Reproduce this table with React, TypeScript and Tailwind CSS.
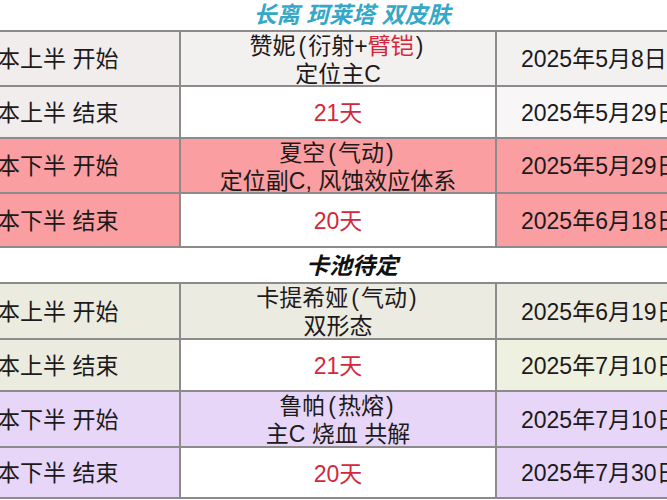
import React from 'react';

const FONT = { fontFamily: '"Liberation Sans", "Noto Sans CJK SC", sans-serif' };

type Row = {
    label: string;
    info: React.ReactNode;
    date: string;
    h: string;
    bg: string;
    mid: string;
    end: string;
};

const Red = ({ children }: { children: React.ReactNode }) => (
    <span className="text-[#d3283c]">{children}</span>
);

// half-width brackets with a bit of air, like the source sheet
const L = () => <span className="ml-[3px] mr-[2px]">(</span>;
const R = () => <span className="ml-[2px] mr-[3px]">)</span>;

const firstPool: Row[] = [
    {
        label: '本上半 开始',
        info: <>赞妮<L />衍射+<Red>臂铠</Red><R /><br />定位主C</>,
        date: '2025年5月8日',
        h: 'h-[55px]',
        bg: 'bg-[#f1eded]',
        mid: 'bg-[#f3f0f0]',
        end: 'bg-[#f3f0f0]',
    },
    {
        label: '本上半 结束',
        info: <Red>21天</Red>,
        date: '2025年5月29日',
        h: 'h-[52px]',
        bg: 'bg-[#f1eded]',
        mid: 'bg-white',
        end: 'bg-[#f8f6f6]',
    },
    {
        label: '本下半 开始',
        info: <>夏空<L />气动<R /><br />定位副C, 风蚀效应体系</>,
        date: '2025年5月29日',
        h: 'h-[55px]',
        bg: 'bg-[#fb9ea1]',
        mid: 'bg-[#fb9ea1]',
        end: 'bg-[#fb9ea1]',
    },
    {
        label: '本下半 结束',
        info: <Red>20天</Red>,
        date: '2025年6月18日',
        h: 'h-[54px]',
        bg: 'bg-[#fb9ea1]',
        mid: 'bg-white',
        end: 'bg-[#fb9ea1]',
    },
];

const secondPool: Row[] = [
    {
        label: '本上半 开始',
        info: <>卡提希娅<L />气动<R /><br />双形态</>,
        date: '2025年6月19日',
        h: 'h-[56px]',
        bg: 'bg-[#ebebe0]',
        mid: 'bg-[#ecebe2]',
        end: 'bg-[#ecebe2]',
    },
    {
        label: '本上半 结束',
        info: <Red>21天</Red>,
        date: '2025年7月10日',
        h: 'h-[52px]',
        bg: 'bg-[#ebebe0]',
        mid: 'bg-white',
        end: 'bg-[#eef0e0]',
    },
    {
        label: '本下半 开始',
        info: <>鲁帕<L />热熔<R /><br />主C 烧血 共解</>,
        date: '2025年7月10日',
        h: 'h-[56px]',
        bg: 'bg-[#e7d6f8]',
        mid: 'bg-[#e7d6f8]',
        end: 'bg-[#e7d6f8]',
    },
    {
        label: '本下半 结束',
        info: <Red>20天</Red>,
        date: '2025年7月30日',
        h: 'h-[51px]',
        bg: 'bg-[#e7d6f8]',
        mid: 'bg-white',
        end: 'bg-[#e7d6f8]',
    },
];

function PoolTable({ rows }: { rows: Row[] }) {
    return (
        <div className="w-[720px] border-t-2 border-[#8c8a8a]">
            {rows.map((r, i) => (
                <div key={i} className={`flex ${r.h} border-b-2 border-[#8c8a8a] text-[23px] text-[#1c1a1a]`}>
                    <div className={`w-[181px] shrink-0 flex items-center pt-[2px] border-r-2 border-[#8c8a8a] ${r.bg}`}>
                        <span className="-ml-[3px] whitespace-nowrap">{r.label}</span>
                    </div>
                    <div className={`w-[316px] shrink-0 flex items-center justify-center text-center leading-[28px] pt-[2px] border-r-2 border-[#8c8a8a] ${r.mid}`}>
                        <div className="whitespace-nowrap">{r.info}</div>
                    </div>
                    <div className={`flex-1 flex items-center pl-[24px] pt-[2px] whitespace-nowrap ${r.end}`}>
                        {r.date}
                    </div>
                </div>
            ))}
        </div>
    );
}

export default function App() {
    return (
        <div className="w-[667px] h-[500px] overflow-hidden bg-white" style={FONT}>
            <div className="h-[30px] flex items-center justify-center pl-[37px]">
                <span className="italic font-semibold text-[23px] leading-[30px] text-[#35a8c8]">长离 珂莱塔 双皮肤</span>
            </div>
            <PoolTable rows={firstPool} />
            <div className="h-[34px] flex items-center justify-center pl-[37px] pt-[2px]">
                <span className="italic font-bold text-[23px] text-[#111]">卡池待定</span>
            </div>
            <PoolTable rows={secondPool} />
        </div>
    );
}
